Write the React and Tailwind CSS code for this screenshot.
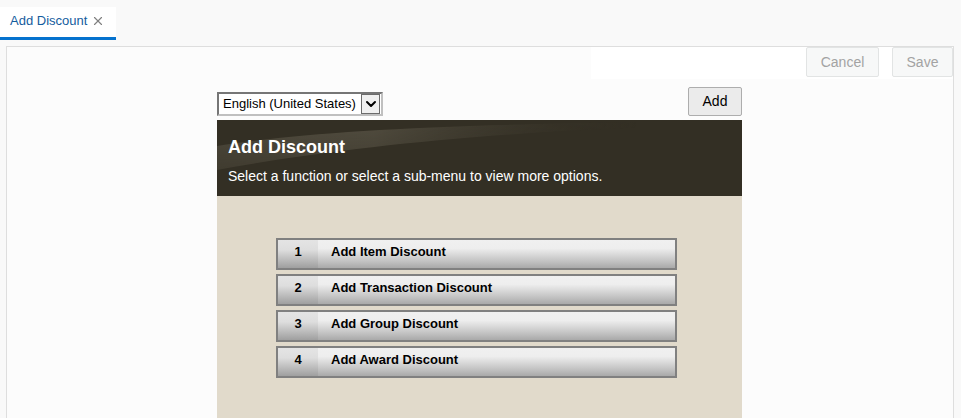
import { X, ChevronDown } from 'lucide-react';

const ITEMS = [
  { n: 1, label: 'Add Item Discount' },
  { n: 2, label: 'Add Transaction Discount' },
  { n: 3, label: 'Add Group Discount' },
  { n: 4, label: 'Add Award Discount' },
];

const MenuButton = ({ n, label }) => (
  <div className="flex h-[32px] w-[401px] border-2 border-[#808080] bg-[linear-gradient(#f0f0f0_0%,#eeeeee_30%,#c8c8c8_70%,#a9a9a9_100%)]">
    <div className="flex w-[40px] items-center justify-center pb-[5px] bg-[linear-gradient(#e4e4e4_0%,#dedede_35%,#bcbcbc_70%,#9f9f9f_100%)] text-[13px] font-bold text-black">
      {n}
    </div>
    <div className="flex items-center pb-[5px] pl-[13px] text-[13px] font-bold text-black">{label}</div>
  </div>
);

export default function App() {
  return (
    <div className="flex h-[418px] w-[961px] flex-col overflow-hidden bg-[#f9f9f9] font-['Liberation_Sans',Arial,sans-serif]">
      {/* Tab strip */}
      <div className="flex h-[40px] pt-[7px]">
        <div className="flex h-[33px] w-[116px] items-center gap-[4px] border-b-[3px] border-[#0572ce] bg-white pl-[10px] pb-[2px]">
          <span className="text-[13px] text-[#145c9e]">Add Discount</span>
          <X size={14} strokeWidth={2} className="text-[#808080]" />
        </div>
      </div>

      {/* Panel */}
      <div className="ml-[6px] mt-[6px] flex w-[948px] flex-1 flex-col border border-b-0 border-[#dedede] bg-[#fcfcfc]">
        <div className="flex justify-end">
          <div className="flex h-[32px] w-[362px] items-start justify-end gap-[13px] bg-white">
            <button className="h-[30px] w-[73px] rounded-[2px] border border-[#e2e4e4] bg-[#f7f8f8] text-[14px] text-[#a3a3a3]">Cancel</button>
            <button className="h-[30px] w-[61px] rounded-[2px] border border-[#e2e4e4] bg-[#f7f8f8] text-[14px] text-[#a3a3a3]">Save</button>
          </div>
        </div>

        <div className="ml-[210px] mt-[8px] flex w-[525px] flex-1 flex-col">
          <div className="flex items-end justify-between">
            <div className="flex h-[24px] w-[166px] items-center border-2 border-t-[#767676] border-l-[#767676] border-r-[#c0c0c0] border-b-[#c0c0c0] bg-white pl-[4px]">
              <span className="flex-1 text-[13px] text-black">English (United States)</span>
              <div className="mr-[1px] flex h-[20px] w-[19px] items-center justify-center border border-[#6b6b6b] bg-[#f0f0f0]">
                <ChevronDown size={16} strokeWidth={3} className="text-black" />
              </div>
            </div>
            <button className="h-[29px] w-[54px] rounded-[2px] border border-[#adadad] bg-[#ebebeb] text-[14px] text-black">Add</button>
          </div>

          {/* Header */}
          <div className="relative mt-[4px] h-[76px] overflow-hidden bg-[#332f24] px-[11px] pt-[17px]">
            <svg className="absolute inset-0" width="525" height="76" viewBox="0 0 525 76">
              <defs>
                <linearGradient id="sw" x1="0" y1="0" x2="1" y2="0">
                  <stop offset="0" stopColor="#524d40" stopOpacity="0.9" />
                  <stop offset="0.3" stopColor="#5c5749" stopOpacity="0.75" />
                  <stop offset="0.8" stopColor="#332f24" stopOpacity="0" />
                </linearGradient>
                <linearGradient id="fade" x1="0" y1="0" x2="0" y2="1">
                  <stop offset="0" stopColor="#fff" stopOpacity="1" />
                  <stop offset="1" stopColor="#fff" stopOpacity="0.2" />
                </linearGradient>
                <mask id="m">
                  <rect width="525" height="76" fill="url(#fade)" />
                </mask>
              </defs>
              <path d="M0 26 C 100 10, 250 3, 525 1 L 525 4 C 300 9, 130 26, 0 50 Z" fill="url(#sw)" mask="url(#m)" />
            </svg>
            <div className="relative text-[18px] font-bold leading-[20px] text-white">Add Discount</div>
            <div className="relative mt-[11px] text-[14px] leading-[16px] text-white">Select a function or select a sub-menu to view more options.</div>
          </div>

          {/* Menu */}
          <div className="flex flex-1 flex-col gap-[4px] bg-[#e1dacb] pl-[59px] pt-[42px]">
            {ITEMS.map(i => (
              <MenuButton key={i.n} {...i} />
            ))}
          </div>
        </div>
      </div>
    </div>
  );
}
